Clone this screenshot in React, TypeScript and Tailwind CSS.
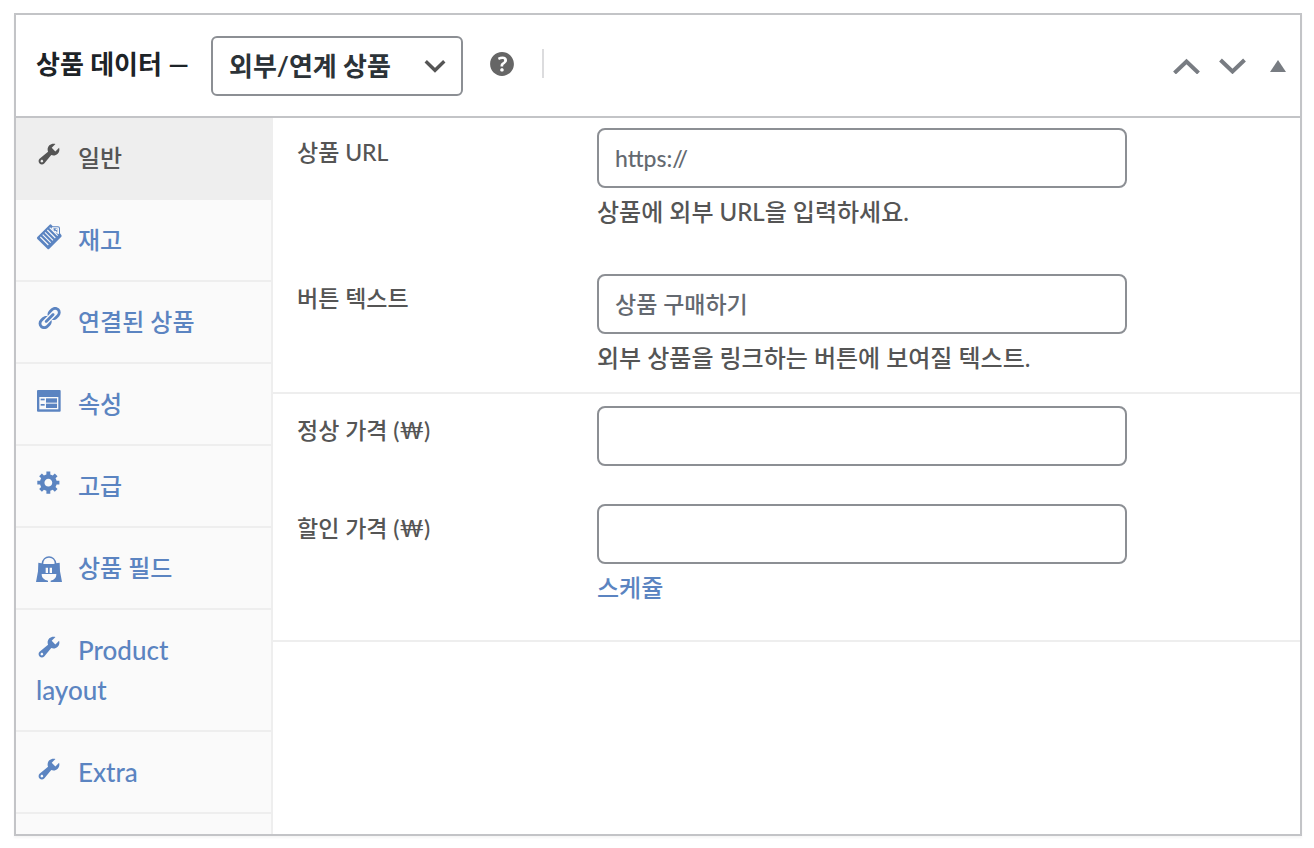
import React, { useState } from 'react';

interface IconProps {
  className?: string;
}

interface Tab {
  id: string;
  label: string;
  Icon: React.FC<IconProps>;
  latin?: boolean;
}

interface FieldProps {
  id: string;
  label: string;
  placeholder?: string;
  children?: React.ReactNode;
}

const WrenchIcon: React.FC<IconProps> = ({ className }) => (
  <svg viewBox="0 0 20 20" fill="currentColor" className={className} aria-hidden="true">
    <path d="M16.68 9.77c-1.34 1.34-3.3 1.67-4.95.99l-5.41 6.52c-.99.99-2.59.99-3.58 0s-.99-2.59 0-3.57l6.52-5.42c-.68-1.65-.35-3.61.99-4.95 1.28-1.28 3.12-1.62 4.72-1.06l-2.89 2.89 2.82 2.82 2.86-2.87c.53 1.58.18 3.39-1.08 4.65zM3.81 16.21c.4.39 1.04.39 1.43 0 .4-.4.4-1.04 0-1.43-.39-.4-1.03-.4-1.43 0-.39.39-.39 1.03 0 1.43z" />
  </svg>
);

const LinkIcon: React.FC<IconProps> = ({ className }) => (
  <svg viewBox="0 0 20 20" fill="currentColor" className={className} aria-hidden="true">
    <path d="M17.74 2.76c1.68 1.69 1.68 4.41 0 6.1l-1.53 1.52c-1.12 1.12-2.7 1.47-4.14 1.09l2.62-2.61.76-.77.76-.76c.84-.84.84-2.2 0-3.04-.84-.85-2.2-.85-3.04 0l-.77.76-3.38 3.38c-.37-1.44-.02-3.02 1.1-4.14l1.52-1.53c1.69-1.68 4.42-1.68 6.1 0zM8.59 13.43l5.34-5.34c.42-.42.42-1.1 0-1.52-.44-.43-1.13-.39-1.53 0l-5.33 5.34c-.42.42-.42 1.1 0 1.52.44.43 1.13.39 1.52 0zm-.76 2.29l4.14-4.15c.38 1.44.03 3.02-1.09 4.14l-1.52 1.53c-1.69 1.68-4.41 1.68-6.1 0-1.68-1.68-1.68-4.42 0-6.1l1.53-1.52c1.12-1.12 2.7-1.47 4.14-1.1l-4.14 4.15c-.85.84-.85 2.2 0 3.05.84.84 2.2.84 3.04 0z" />
  </svg>
);

const GearIcon: React.FC<IconProps> = ({ className }) => (
  <svg viewBox="0 0 20 20" fill="currentColor" className={className} aria-hidden="true">
    <path d="M18 12h-2.18c-.17.7-.44 1.35-.81 1.93l1.54 1.54-2.1 2.1-1.54-1.54c-.58.36-1.23.63-1.91.79V19H8v-2.18c-.68-.16-1.33-.43-1.91-.79l-1.54 1.54-2.12-2.12 1.54-1.54c-.36-.58-.63-1.23-.79-1.91H1V9.03h2.17c.16-.7.44-1.35.8-1.94L2.43 5.55l2.1-2.1 1.54 1.54c.58-.37 1.24-.64 1.93-.81V2h3v2.18c.68.16 1.33.43 1.91.79l1.54-1.54 2.12 2.12-1.54 1.54c.36.59.64 1.24.8 1.94H18V12zm-8.5 1.5c1.66 0 3-1.34 3-3s-1.34-3-3-3-3 1.34-3 3 1.34 3 3 3z" />
  </svg>
);

const InventoryIcon: React.FC<IconProps> = ({ className }) => (
  <svg viewBox="0 -3 78 78" fill="currentColor" className={className} aria-hidden="true">
    <path d="M41 2q2-2 5 0l4 5 16 0q6 0 6 6v15l4 5q2 3 0 5L40 74q-3 3-6 0L4 45q-3-3 0-6z" />
    <g stroke="#fafafa" strokeWidth="3.2">
      <path d="M13 39l24 24M20 32l24 24M27 25l24 24M34 18l24 24M41 11l24 24" />
    </g>
    <path d="M48 10h17q4 0 4 4v17L58 26 46 14z" fill="#fafafa" />
    <path d="M52 13h12v12h-3v-4l-7-1z" />
    <circle cx="61" cy="16" r="2.5" fill="#fafafa" />
  </svg>
);

const AttributesIcon: React.FC<IconProps> = ({ className }) => (
  <svg viewBox="0 0 78 78" className={className} aria-hidden="true">
    <rect x="3" y="9" width="71" height="65" rx="3" fill="currentColor" />
    <rect x="10" y="30" width="57" height="37" fill="#fafafa" />
    <g fill="currentColor">
      <rect x="14" y="35" width="12" height="5" />
      <rect x="14" y="51" width="12" height="5" />
      <rect x="30" y="34" width="33" height="13" />
      <rect x="30" y="50" width="33" height="13" />
    </g>
  </svg>
);

const BagIcon: React.FC<IconProps> = ({ className }) => (
  <svg viewBox="0 -15 78 78" className={className} aria-hidden="true">
    <path d="M19 24C21-4 57-4 59 24" fill="none" stroke="currentColor" strokeWidth="5" />
    <path d="M7 20l9 2 8 2h28l8-2 11-2 1 26 6 32H0l6-32z" fill="currentColor" />
    <path d="M29 35h7v16h-7zM41 35h7v16h-7z" fill="#fafafa" />
    <path d="M17 54h44c0 12-7 18-17 20v4H36v-4C25 72 17 66 17 54z" fill="#fafafa" />
  </svg>
);

const HelpIcon: React.FC<IconProps> = ({ className }) => (
  <svg viewBox="0 0 20 20" fill="currentColor" className={className} aria-hidden="true">
    <path d="M17 10c0-3.87-3.14-7-7-7-3.87 0-7 3.13-7 7s3.13 7 7 7c3.86 0 7-3.13 7-7zm-6.3 1.48H9.14v-.43c0-.38.08-.7.24-.98s.46-.57.88-.89c.41-.29.68-.53.81-.71.14-.18.2-.39.2-.62 0-.25-.09-.44-.28-.58-.19-.13-.45-.19-.79-.19-.58 0-1.25.19-2 .57l-.64-1.28c.87-.49 1.8-.74 2.77-.74.81 0 1.45.2 1.92.58.48.39.71.91.71 1.55 0 .43-.09.8-.29 1.11-.19.32-.57.67-1.11 1.06-.38.28-.61.49-.71.63-.1.15-.15.34-.15.57v.35zm-1.47 2.74c-.18-.17-.27-.42-.27-.73 0-.33.08-.58.26-.75s.43-.25.77-.25c.32 0 .57.09.75.26s.27.42.27.74c0 .3-.09.55-.27.72-.18.18-.43.27-.75.27-.33 0-.58-.09-.76-.26z" />
  </svg>
);

const tabs: Tab[] = [
  { id: 'general', label: '일반', Icon: WrenchIcon },
  { id: 'inventory', label: '재고', Icon: InventoryIcon },
  { id: 'linked', label: '연결된 상품', Icon: LinkIcon },
  { id: 'attributes', label: '속성', Icon: AttributesIcon },
  { id: 'advanced', label: '고급', Icon: GearIcon },
  { id: 'fields', label: '상품 필드', Icon: BagIcon },
  { id: 'layout', label: 'Product layout', Icon: WrenchIcon, latin: true },
  { id: 'extra', label: 'Extra', Icon: WrenchIcon, latin: true },
];

const Field: React.FC<FieldProps> = ({ id, label, placeholder, children }) => (
  <div className="grid grid-cols-[300px_minmax(0,530px)] items-start">
    <label htmlFor={id} className="pt-1 text-[23px] leading-10">{label}</label>
    <div>
      <input
        id={id}
        type="text"
        placeholder={placeholder}
        className="block h-[60px] w-full rounded-lg border-2 border-[#8c8f94] bg-white px-4 text-[23px] text-[#2c3338] placeholder:text-[#646970]"
      />
      {children}
    </div>
  </div>
);

const App: React.FC = () => {
  const [active, setActive] = useState('general');

  return (
    <div className="pt-[13px] pr-3 pb-3 pl-[14px] font-['Lato','Noto_Sans_CJK_KR',sans-serif] font-medium text-[#555]">
      <section className="border-2 border-[#c3c4c7] bg-white shadow-[0_2px_2px_rgba(0,0,0,0.04)]">
        <header className="flex h-[103px] items-center border-b-2 border-[#c3c4c7] pr-[14px] pl-5">
          <label htmlFor="product-type" className="pb-1 text-[26px] leading-10 font-bold text-[#1d2327]">상품 데이터 —</label>
          <div className="relative ml-[22px]">
            <select
              id="product-type"
              className="block h-[60px] w-[252px] appearance-none rounded-md border-2 border-[#8c8f94] bg-white pt-0.5 pl-4 text-[26px] font-bold text-[#2c3338]"
            >
              <option>외부/연계 상품</option>
            </select>
            <svg viewBox="0 0 20 20" className="pointer-events-none absolute top-3.5 right-3 size-8" aria-hidden="true">
              <path d="M4.2 7L10 12.7 15.8 7" fill="none" stroke="#555" strokeWidth="2.1" />
            </svg>
          </div>
          <button type="button" aria-label="도움말" className="mb-1 ml-[22px] text-[#666]">
            <HelpIcon className="size-[34px]" />
          </button>
          <span className="mb-1 ml-[23px] h-[29px] w-0.5 bg-[#dcdcde]"></span>
          <div className="ml-auto flex items-center text-[#787c82]">
            <button type="button" aria-label="위로 이동">
              <svg viewBox="0 0 27 16" className="h-4 w-[27px]" fill="none" stroke="currentColor" strokeWidth="4">
                <path d="M1.5 15L13.5 3.5l12 11.5" />
              </svg>
            </button>
            <button type="button" aria-label="아래로 이동" className="ml-[19px]">
              <svg viewBox="0 0 27 16" className="h-4 w-[27px]" fill="none" stroke="currentColor" strokeWidth="4">
                <path d="M1.5 2L13.5 13.5 25.5 2" />
              </svg>
            </button>
            <button type="button" aria-label="패널 접기" className="ml-6">
              <svg viewBox="0 0 16 12" className="h-3 w-4" fill="currentColor">
                <path d="M8 0l8 12H0z" />
              </svg>
            </button>
          </div>
        </header>

        <div className="flex">
          <ul className="w-[257px] shrink-0 border-r-2 border-[#eee] bg-[#fafafa] pb-5">
            {tabs.map(({ id, label, Icon, latin }) => (
              <li key={id}>
                <a
                  href={`#${id}`}
                  onClick={() => setActive(id)}
                  className={`block border-b-2 border-[#eee] py-5 pr-8 pl-5 leading-10 ${latin ? 'text-[26px]' : 'text-[24px]'} ${active === id ? 'bg-[#eee] text-[#555]' : 'text-[#5b84c1]'}`}
                >
                  <Icon className="mr-4 inline-block size-[26px] overflow-visible align-baseline" />
                  {label}
                </a>
              </li>
            ))}
          </ul>

          <div className="min-w-0 flex-1">
            <div className="flex flex-col gap-[42px] border-b-2 border-[#eee] px-6 pt-[10px] pb-[14px]">
              <Field id="product-url" label="상품 URL" placeholder="https://">
                <p className="pt-1 text-[24px] leading-10">상품에 외부 URL을 입력하세요.</p>
              </Field>
              <Field id="button-text" label="버튼 텍스트" placeholder="상품 구매하기">
                <p className="pt-1 text-[24px] leading-10">외부 상품을 링크하는 버튼에 보여질 텍스트.</p>
              </Field>
            </div>
            <div className="flex flex-col gap-[38px] border-b-2 border-[#eee] px-6 pt-3 pb-8">
              <Field id="regular-price" label="정상 가격 (₩)" />
              <Field id="sale-price" label="할인 가격 (₩)">
                <a href="#schedule" className="inline-block pt-1 text-[24px] leading-10 text-[#5b84c1]">스케쥴</a>
              </Field>
            </div>
          </div>
        </div>
      </section>
    </div>
  );
};

export default App;
